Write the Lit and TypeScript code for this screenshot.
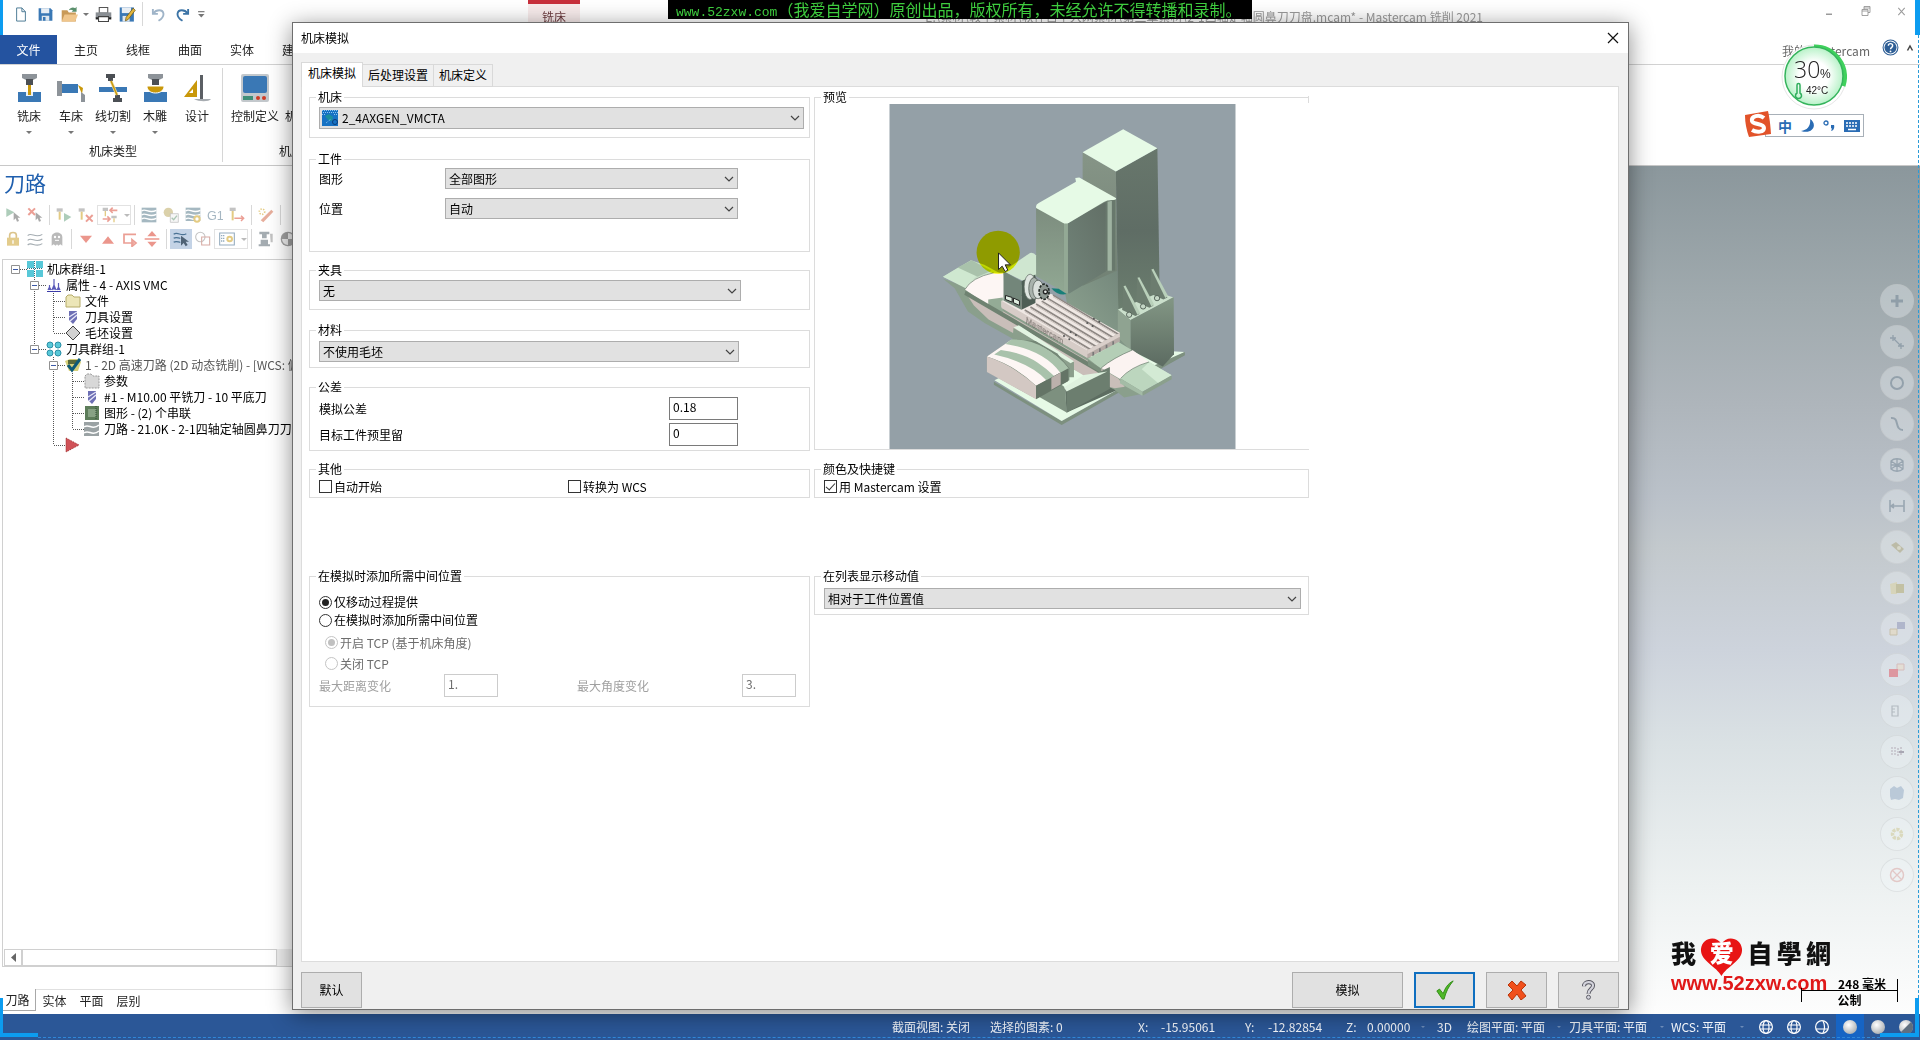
import { LitElement, html, css, svg, nothing, TemplateResult } from "lit";
import { customElement, property, state } from "lit/decorators.js";
import { classMap } from "lit/directives/class-map.js";

const BLUE = "#3a78b5";
const GOLD = "#c9980a";

/* Icons are drawn on a 24 x 24 grid unless another box is given. */
const icons: Record<string, TemplateResult> = {
  doc: svg`<path d="M4.500 1.500h9l6 6v15h-15z" fill="#fff" stroke="#4c7a94" stroke-width="1.600"/><path d="M13.500 1.500v6h6" fill="none" stroke="#4c7a94" stroke-width="1.600"/>`,
  save: svg`<path d="M1 2h19l3 3v17H1z" fill="${BLUE}"/><path d="M5 2h13v8H5z" fill="#e8eef4"/><path d="M6 14h12v8H6z" fill="#dfe7ee"/><path d="M8 16h4v6H8z" fill="${BLUE}"/>`,
  open: svg`<path d="M1 6h8l2 3h10v13H1z" fill="#c99a58"/><path d="M5 12h19l-4 10H1z" fill="#f0c68c"/><path d="M11 6c2-4 6-5 9-3l2-2v7h-7l2-2c-2-1-4-1-6 0z" fill="#5a8f6c"/>`,
  print: svg`<path d="M6 2h12v8H6z" fill="#fff" stroke="#555" stroke-width="1.500"/><path d="M1 9h22v8H1z" fill="#8a8f94"/><path d="M1 16h22v3H1z" fill="#222"/><path d="M5 15h14v7H5z" fill="#fff" stroke="#444" stroke-width="1.500"/>`,
  saveas: svg`<path d="M1 2h20v20H1z" fill="${BLUE}"/><path d="M4 2h13v8H4z" fill="#e8eef4"/><path d="M5 14h10v8H5z" fill="#dfe7ee"/><path d="M20 3l3 3-10 13-4 2 1-5z" fill="#e2b53c" stroke="#6b5310"/>`,
  undo: svg`<path d="M3 3v8h8" fill="none" stroke="#9fb4c8" stroke-width="3"/><path d="M4 10c4-6 15-7 16 1 0 5-3 8-8 11" fill="none" stroke="#9fb4c8" stroke-width="3"/>`,
  redo: svg`<path d="M21 3v8h-8" fill="none" stroke="#3c74a6" stroke-width="3"/><path d="M20 10C16 4 5 3 4 11c0 5 3 8 8 11" fill="none" stroke="#3c74a6" stroke-width="3"/>`,
  more: svg`<path d="M7 7h11v2H7z" fill="#777"/><path d="M7 12h11l-5.500 6z" fill="#777"/>`,
  min: svg`<path d="M4 17h12v3H4z" fill="#9a9a9a"/>`,
  restore: svg`<path d="M8 3h12v12H8zM8 6h12" fill="none" stroke="#8c8c8c" stroke-width="1.600"/><path d="M4 9h12v12H4zM4 12h12" fill="#fff" stroke="#8c8c8c" stroke-width="1.600"/>`,
  close: svg`<path d="M5 4l14 16M19 4L5 20" stroke="#9a9a9a" stroke-width="2.200"/>`,
  select: svg`<path d="M2 2l12 6-12 7z" fill="#5f9c78"/><path d="M13 8v12l3-3 2 5 3-1-2-5h4z" fill="#555"/>`,
  deselect: svg`<path d="M2 2l10 10M12 2L2 12" stroke="#d8402c" stroke-width="3"/><path d="M13 8v12l3-3 2 5 3-1-2-5h4z" fill="#555"/>`,
  regen: svg`<path d="M1 2h9v5H1z" fill="#888"/><path d="M4 7h3v12H4z" fill="${GOLD}"/><path d="M12 9l11 6-11 7z" fill="#5f9c78"/>`,
  regenx: svg`<path d="M1 2h9v5H1z" fill="#888"/><path d="M4 7h3v12H4z" fill="${GOLD}"/><path d="M12 12l10 10M22 12L12 22" stroke="#d8402c" stroke-width="3"/>`,
  swap: svg`<path d="M1 1h8v5H1zM14 13h8v4h-8z" fill="#888"/><path d="M4 6h2v8H4zM17 17h2v6h-2z" fill="${GOLD}"/><path d="M12 5h11M16 1l-4 4 4 4M1 18h10M8 14l4 4-4 4" stroke="#d8402c" stroke-width="2.400" fill="none"/>`,
  waves: svg`<path d="M1 1h22v22H1z" fill="#4d7484"/><path d="M1 6c6-5 10 5 22-1M1 12c6-5 10 5 22-1M1 18c6-5 10 5 22-1" stroke="#fff" stroke-width="2" fill="none"/>`,
  verify: svg`<circle cx="8" cy="8" r="7" fill="#b9a458"/><path d="M11 10h12v13H11z" fill="#eee" stroke="#777"/><path d="M13 16l3 3 5-6" stroke="#5a8f6c" stroke-width="2" fill="none"/>`,
  wavegear: svg`<path d="M1 1h22v20H1z" fill="#4d7484"/><path d="M1 6c6-5 10 5 22-1M1 12c6-5 10 5 22-1M1 18c6-5 10 5 22-1" stroke="#fff" stroke-width="2" fill="none"/><circle cx="18" cy="18" r="4" fill="#fff" stroke="${GOLD}" stroke-width="3"/>`,
  g1: svg`<text x="0" y="19" font-size="19" fill="#4d6f86" font-family="Liberation Sans, sans-serif">G1</text>`,
  toolarrow: svg`<path d="M1 1h9v5H1z" fill="#888"/><path d="M4 6h3v14H4z" fill="${GOLD}"/><path d="M8 17h14M18 13l4 4-4 4" stroke="#d8402c" stroke-width="2.200" fill="none"/>`,
  wand: svg`<path d="M4 20L20 4l3 3L8 23z" fill="#d0603c"/><circle cx="6" cy="7" r="4" fill="none" stroke="${GOLD}" stroke-width="2.500" stroke-dasharray="2 2"/>`,
  lock: svg`<path d="M7 11V6c0-5 10-5 10 0v5" fill="none" stroke="#b98a1c" stroke-width="2.500"/><path d="M3 10h18v12H3z" fill="#c99a1c"/><path d="M11 14h2v5h-2z" fill="#fff"/>`,
  wavy: svg`<path d="M1 7c6-6 11 5 22-2M1 14c6-6 11 5 22-2M1 21c6-6 11 5 22-2" stroke="#4b5b66" stroke-width="1.600" fill="none"/>`,
  ghost: svg`<path d="M4 22V9c0-9 16-9 16 0v13l-3-2-3 2-2-2-2 2-3-2z" fill="#777"/><circle cx="9" cy="9" r="1.800" fill="#fff"/><circle cx="15" cy="9" r="1.800" fill="#fff"/><path d="M9 14h6" stroke="#fff" stroke-width="1.500"/>`,
  down: svg`<path d="M3 7h18L12 18z" fill="#d8301c"/>`,
  up: svg`<path d="M3 19h18L12 8z" fill="#d8301c"/>`,
  loop: svg`<path d="M21 5H3v13h15M15 13l6 5-6 5z" fill="none" stroke="#d8402c" stroke-width="2.600"/>`,
  split: svg`<path d="M12 0l7 8H5zM12 24l7-8H5zM1 11h22v2H1z" fill="#d8301c"/>`,
  wavesel: svg`<path d="M1 5c6-5 11 4 19-1M1 11c4-3 7 0 10 0M1 17c4-3 7 0 10 0" stroke="#2c5a80" stroke-width="1.800" fill="none"/><path d="M12 7v15l4-4 3 5 3-2-3-5h5z" fill="#33475a"/>`,
  shapes: svg`<circle cx="8" cy="9" r="7" fill="none" stroke="#888" stroke-width="1.600"/><path d="M10 9h12v12H10z" fill="none" stroke="#b05a4c" stroke-width="1.600"/>`,
  listgear: svg`<path d="M1 3h22v18H1z" fill="#fff" stroke="#2c5a80" stroke-width="1.600"/><path d="M4 6v12M7 6v12" stroke="#2c5a80" stroke-width="2" stroke-dasharray="2 2"/><circle cx="16" cy="12" r="3.500" fill="none" stroke="${GOLD}" stroke-width="3"/>`,
  machine: svg`<path d="M2 1h15v4H2zM6 5h7v6H6zM1 20h17v3H1zM4 13h11v7H4z" fill="#4b5b66"/><path d="M18 4h4v13h-3z" fill="#888"/>`,
  ball: svg`<circle cx="12" cy="12" r="11" fill="#444"/><path d="M12 3a9 9 0 0 1 9 9h-9zM12 12v9a9 9 0 0 1-9-9z" fill="#ddd"/>`,
  help: svg`<circle cx="12" cy="12" r="10.500" fill="#fff" stroke="#2f5f96" stroke-width="1.500"/><circle cx="12" cy="12" r="8.500" fill="#2f5f96"/><path d="M9 9.500c0-4 6-4 6 0 0 2.500-3 2-3 5" stroke="#fff" stroke-width="2" fill="none"/><circle cx="12" cy="17.500" r="1.300" fill="#fff"/>`,
  caretup: svg`<path d="M7 17l5-9 5 9" fill="none" stroke="#444" stroke-width="3"/>`,
  /* ribbon, 28 x 28 */
  mill: svg`<path d="M7 0h15v4l-4 2h-7L7 4z" fill="#8d9399"/><path d="M11 5h7v6h-7z" fill="#4b4f54"/><path d="M3 18h23v10H3z" fill="${BLUE}"/><path d="M11 18h7v4h-7z" fill="#e9f0f6"/><path d="M13 11h3v10h-3z" fill="${GOLD}"/>`,
  lathe: svg`<path d="M0 7h5v15H0z" fill="#8d9399"/><path d="M5 10h16v9H5z" fill="${BLUE}"/><path d="M21 11l5 3-1 6z" fill="${GOLD}"/><path d="M24 18l4 3v7h-4z" fill="#8d9399"/>`,
  wire: svg`<path d="M0 13h28v5H0z" fill="${BLUE}"/><path d="M7 0h9v4h-2v3H9V4H7zM14 28h9v-4h-2v-3h-5v3h-2z" fill="#4b4f54"/><path d="M12 7l6 14" stroke="#e8d9a0" stroke-width="3"/><path d="M12 7l6 14" stroke="${GOLD}" stroke-width="1.500"/>`,
  router: svg`<path d="M7 0h15v4l-4 2h-7L7 4z" fill="#8d9399"/><path d="M11 5h7v6h-7z" fill="#4b4f54"/><path d="M3 18h23v10H3z" fill="${BLUE}"/><path d="M6 12h17c0 4-3 7-8.500 7S6 16 6 12z" fill="${GOLD}" stroke="#fff"/>`,
  design: svg`<path d="M14 6v17H1zM10 15v4H6z" fill="${GOLD}" fill-rule="evenodd"/><path d="M17 1h3v25h-3z" fill="#5b5f64"/><path d="M11 25h17c-2 3-12 3-17 0z" fill="#a7acb1"/>`,
  control: svg`<rect x="0" y="0" width="28" height="28" rx="2" fill="#c3c8cc"/><rect x="2" y="2" width="24" height="17" rx="2" fill="${BLUE}"/><path d="M2 22h10v4H2z" fill="#3f8f78"/><circle cx="17" cy="24" r="2" fill="#cf3b25"/><circle cx="23" cy="24" r="2" fill="#cf3b25"/>`,
  /* tree, 16 x 16 */
  group: svg`<g fill="#58c8d8"><path d="M0 0h7v7H0zM9 0h7v7H9zM0 9h7v7H0zM9 9h7v7H9z"/></g><path d="M0 7.500h16M7.500 0v16" stroke="#2f6f80" stroke-dasharray="1 1"/>`,
  props: svg`<path d="M1 14.500h14" stroke="#3b3ba8"/><path d="M3.500 13V8M8 13V2M12.500 13V6M2 13l1.500-3L5 13M6 13l2-5 2 5M11 13l1.500-3 1.500 3" stroke="#5a5ab8" stroke-width="1.200" fill="none"/>`,
  folder: svg`<path d="M1 4l2-2h4l2 2h6v10H1z" fill="#ece6b8" stroke="#b5ab68"/>`,
  tool: svg`<path d="M4 2h8v8l-4 5-4-4z" fill="#6d6fb4"/><path d="M4 8l8-5M5 12l7-6" stroke="#e8e8f8" stroke-width="1.300"/>`,
  stock: svg`<path d="M8 1l7 7-7 7-7-7z" fill="#d2d2d2" stroke="#444"/>`,
  tgroup: svg`<g fill="#58c8d8" stroke="#2b8fa6"><circle cx="4" cy="4" r="3"/><circle cx="12" cy="4" r="3"/><circle cx="4" cy="12" r="3"/><circle cx="12" cy="12" r="3"/></g>`,
  op: svg`<path d="M0 4l5-2h9l2 3-3 9H4z" fill="#d6cf7a"/><path d="M3 3h9v4H3z" fill="#5a6a3a"/><path d="M3 8l4 5 8-11" stroke="#0d5a78" stroke-width="3" fill="none"/>`,
  params: svg`<path d="M1 3l2-2h4l2 2h6v12H1z" fill="#d8d8d8" stroke="#999" stroke-dasharray="2 1"/>`,
  geom: svg`<path d="M1 1h14v14H1z" fill="#5d7d5a"/><path d="M4 4h8v8H4z" fill="#87a284"/><path d="M12 1v14" stroke="#2f4a34" stroke-dasharray="1 1"/>`,
  nc: svg`<path d="M0 1h15v14H0z" fill="#9aa2a4"/><path d="M0 6c5-4 8 4 15-2M0 12c5-4 8 4 15-2" stroke="#fff" stroke-width="1.500" fill="none"/>`,
  insert: svg`<path d="M1 1l13 7-13 7z" fill="#d05258" stroke="#a03030" stroke-dasharray="1 1"/>`,
  vmc: svg`<path d="M0 0h16v16H0z" fill="#1672c4"/><path d="M3 6l4-2 4 3-1 4-4-1z" fill="#1c8f9c"/><circle cx="13" cy="12" r="2.500" fill="none" stroke="#0b3d78"/><path d="M0 .500h16M1 2.500h15M0 4.500h4M12 4.500h4M4 13l5-4" stroke="#8cc4f0" stroke-dasharray="1 1"/>`,
  /* quick mask, 16 x 16 */
  q0: svg`<path d="M8 2v12M2 8h12" stroke="#667a8a" stroke-width="3"/>`,
  q1: svg`<path d="M4 1v6M1 4h6M12 9v6M9 12h6M5 5l7 7" stroke="#667a8a" stroke-width="1.300"/>`,
  q2: svg`<circle cx="8" cy="8" r="6" fill="none" stroke="#667a8a" stroke-width="2"/>`,
  q3: svg`<path d="M2 2c9-1 3 12 12 12" fill="none" stroke="#667a8a" stroke-width="2"/>`,
  q4: svg`<path d="M2 4c3-3 9-3 12 0v8c-3 3-9 3-12 0zM2 4l12 8M14 4L2 12M2 8h12M8 2v12" fill="none" stroke="#667a8a" stroke-width="1.300"/>`,
  q5: svg`<path d="M1 2v12M15 2v12M1 8h14M5 6L2 8l3 2" stroke="#667a8a" stroke-width="1.600" fill="none"/>`,
  q6: svg`<path d="M2 6l5-3 8 7-4 4z" fill="#a8a074"/><circle cx="10" cy="9" r="2" fill="#ddd8b8"/>`,
  q7: svg`<path d="M1 4l7-2v12H2z" fill="#d8cf96"/><path d="M7 4h8v9H7z" fill="#b2a868"/>`,
  q8: svg`<path d="M8 1h8v7H8z" fill="#8a90b4"/><path d="M1 8h7v6H1z" fill="#e8d8b4" stroke="#b8a474"/>`,
  q9: svg`<path d="M8 2h7v6H8z" fill="#ecdcc4" stroke="#d09a94"/><path d="M0 7h9v8H0z" fill="#e0505c"/>`,
  q10: svg`<path d="M3 3h6v10H3zM9 3v10M3 6h3M3 9h3M5 3h4" fill="none" stroke="#889098" stroke-width="1.200"/>`,
  q11: svg`<path d="M2 4h6M2 7h6M2 10h6M9 4v9M12 3v9" stroke="#a89aa8" stroke-width="1.600" stroke-dasharray="2 1"/><path d="M10 7h5v2h-5z" fill="#70687c"/>`,
  q12: svg`<path d="M1 4l4-3 3 2 4-2 3 4-1 8-4 2-4-1-4 1-1-4z" fill="#90a8c4"/>`,
  q13: svg`<circle cx="8" cy="8" r="4.500" fill="none" stroke="#ccc48c" stroke-width="3.500" stroke-dasharray="3 1"/>`,
  q14: svg`<circle cx="8" cy="8" r="6.500" fill="none" stroke="#d8a09c" stroke-width="1.500"/><path d="M4 4l8 8M12 4l-8 8" stroke="#d8a09c" stroke-width="1.300"/>`,
};

const icon = (name: string, w = 16, h = w, box = 24) => html`<svg
  class="icon" width=${w} height=${h} viewBox="0 0 ${box} ${box}" preserveAspectRatio="none" aria-hidden="true">${icons[name]}</svg>`;

const sphere = (kind: string) => {
  if (kind === "wire" || kind === "wire2" || kind === "wire3")
    return svg`<g fill="none" stroke="#fff" stroke-width="1.200"><circle cx="8" cy="8" r="6.400"/>${
      kind === "wire3"
        ? svg`<path d="M9 2q3 6 0 12M2 10h12"/>`
        : svg`<ellipse cx="8" cy="8" rx="3" ry="6.400"/><path d="M2 6h12M2 10h12"/>`
    }</g>`;
  return svg`<defs><radialGradient id="ball" cx=".4" cy=".35" r=".7"><stop offset="0" stop-color="#fff"/><stop offset="1" stop-color="#a9adb0"/></radialGradient></defs><circle cx="8" cy="8" r="7" fill="url(#ball)"/>${
    kind === "half" ? svg`<path d="M3 13L13 3a7 7 0 0 1-10 10z" fill="#5f6f80"/>` : nothing
  }`;
};

/* A drop-down list with the flat grey face of a native dialog. */
@customElement("combo-box")
class ComboBox extends LitElement {
  @property() value = "";
  @property() label = "";
  @property() glyph = "";
  static styles = css`
    :host { display: block; min-width: 0; }
    .box { display: grid; grid-template-columns: auto 1fr auto; align-items: center; }
    select {
      grid-area: 1 / 1 / 2 / 4; appearance: none; box-sizing: border-box; width: 100%; height: 21px;
      margin: 0; padding: 0 20px 0 3px; border: 1px solid #adadad; border-radius: 0; background: #e1e1e1;
      color: #000; font: 12px/16px "Noto Sans CJK SC", sans-serif;
    }
    .with-glyph select { height: 22px; padding-left: 22px; }
    .icon { grid-area: 1 / 1; margin-left: 3px; pointer-events: none; }
    .chevron { grid-area: 1 / 3; margin-right: 4px; pointer-events: none; }
  `;
  render() {
    return html`<div class=${classMap({ box: true, "with-glyph": !!this.glyph })}>
      <select aria-label=${this.label}><option>${this.value}</option></select>
      ${this.glyph ? icon(this.glyph, 16, 16, 16) : nothing}
      <svg class="chevron" width="10" height="6" viewBox="0 0 10 6"><path d="M1 1l4 4 4-4" fill="none" stroke="#444" stroke-width="1.200"/></svg>
    </div>`;
  }
}

/* Isometric view of the four-axis mill. */
@customElement("machine-preview")
class MachinePreview extends LitElement {
  static styles = css`
    :host { display: block; }
    svg { display: block; }
    .spot { mix-blend-mode: multiply; }
  `;
  render() {
    const slots = [0, 1, 2, 3, 4, 5].map((i) => {
      const x = 644 + i * 17, y = 692 - i * 9;
      return svg`<path d="M${x} ${y}L${x + 200} ${y + 120}" stroke="#8d8783" stroke-width="5"/><path d="M${x} ${y + 5}L${x + 200} ${y + 125}" stroke="#cfc6c1" stroke-width="3"/>`;
    });
    const gussets = [0, 1, 2].map((i) => {
      const x = 940 + i * 42, y = 620 - i * 25;
      return svg`<path d="M${x} ${y}l7-2 42 86-12 6-40-18z" fill="#6c7d6f"/><path d="M${x + 1} ${y}l6-2 44 82-8 6z" fill="#b9d0ba"/><circle cx="${x + 18}" cy="${y + 86}" r="8" fill="#c4d6c5" stroke="#56655a" stroke-width="3"/>`;
    });
    return html`<svg width="347" height="345" viewBox="237 72 1041 1038" role="img" aria-label="机床预览">
      <defs>
        <linearGradient id="colR" x1="0" y1="0" x2="0" y2="1"><stop offset="0" stop-color="#68776c"/><stop offset=".5" stop-color="#5f6d65"/><stop offset="1" stop-color="#6c7f6f"/></linearGradient>
        <linearGradient id="colL" x1="0" y1="0" x2="0" y2="1"><stop offset="0" stop-color="#869587"/><stop offset="1" stop-color="#6d7d70"/></linearGradient>
        <linearGradient id="headL" x1="0" y1="0" x2="0" y2="1"><stop offset="0" stop-color="#7c8c7e"/><stop offset="1" stop-color="#91a893"/></linearGradient>
        <linearGradient id="headR" x1="1" y1="0" x2="0" y2="1"><stop offset="0" stop-color="#626f66"/><stop offset="1" stop-color="#72857a"/></linearGradient>
        <linearGradient id="base" x1="0" y1="0" x2="0" y2="1"><stop offset="0" stop-color="#839785"/><stop offset="1" stop-color="#5c6b61"/></linearGradient>
        <linearGradient id="slope" x1="0" y1="1" x2="1" y2="0"><stop offset="0" stop-color="#90a692"/><stop offset="1" stop-color="#72857a"/></linearGradient>
      </defs>
      <path d="M237 72h1041v1038H237z" fill="#94a0a7"/>
      <path d="M551 908l204 118 370-208v10L755 1038 551 917z" fill="#7d907f"/>
      <path d="M553 903l60-30 250-70 262 15-370 208z" fill="#e6fae6"/>
      <path d="M985 880l140-62v10l-140 72z" fill="#7d907f"/>
      <path d="M610 800l155 125 5 75-150-85z" fill="#7d907f"/>
      <path d="M765 925l160-90 60 70-215 95z" fill="#5d6d61"/>
      <path d="M765 640l155-68 6 118 36 32v140L780 720z" fill="url(#slope)"/>
      <path d="M818 217l100 58 7 420-107-60z" fill="url(#colL)"/>
      <path d="M918 275l125-70 7 450-125 50z" fill="url(#colR)"/>
      <path d="M818 217l122-69 103 57-125 70z" fill="#e6fae6"/>
      <path d="M770 640l152-66 4 118 36 30v90L780 690z" fill="url(#slope)"/>
      <path d="M924 690l124-50 44 14-130 69z" fill="#cbe0cc"/>
      <path d="M962 722l130-69 1 172-34 37-97-50z" fill="url(#base)"/>
      <path d="M924 690l38 32v92l-38-40z" fill="#8fa391"/>
      ${gussets}
      <path d="M800 294l118 64-4 216h-30l-84-260z" fill="#7a8b7d"/>
      <path d="M888 366l28-6v214h-28z" fill="#68786c"/><path d="M893 366l13-3v211h-13z" fill="#9fb3a1"/>
      <path d="M678 380l92 50v212l-92-52z" fill="url(#headL)"/>
      <path d="M766 432l122-66v210l-110 66-12-2z" fill="url(#headR)"/><path d="M762 428l12 2v212l-12-3z" fill="#93a995"/>
      <path d="M678 380q0-6 8-10l112-64-2-11 12-2 110 62q4 5-8 6-18-1-28 6l-106 63q-10 4-18-1l-80-44z" fill="#e6fae6"/>
      <path d="M724 626q20 24 46 18l-24-16z" fill="#187f78"/>
      <path d="M398 598l35 28 40 70 50 35 90 50 300 150 30 24 60-12-60-48-410-250z" fill="#8a9f8c"/>
      <path d="M466 640l25 38 44 42 90 50 240 145 50 12 30-4-20-25-390-228z" fill="#c9beb9"/>
      <path d="M398 592l84-50 40 14 150 80-98 30-38-12z" fill="#c7dfc8"/>
      <path d="M398 592l46-28 58 20-36 42z" fill="#cfe8d0"/>
      <path d="M442 564l42-22 60 32-42 18z" fill="#a9c2ab"/>
      <path d="M464 630q20-36 86-50h30l4 76-50 22z" fill="#fdf6f4"/>
      <path d="M534 660l44-6v58l-44-26z" fill="#94ab96"/>
      <path d="M466 634l408 236-2 14-410-238z" fill="#6f8271"/>
      <path d="M574 664l60-14 90-6 206 116-5 30-93 45-258-153z" fill="#efe8e4"/>
      <path d="M574 664l258 150v22L574 686z" fill="#d6ccc7"/>
      <path d="M832 813l98-53v28l-98 50z" fill="#b5aaa5"/>
      ${slots}
      <path d="M832 813l98-53v12l-98 53z" fill="#d9cfca"/>
      <path d="M850 818v12M870 807v12M890 796v12M910 786v11" stroke="#777" stroke-width="5" fill="none"/>
      <text x="0" y="0" transform="matrix(.88 .51 -.1 1 646 730)" font-family="Liberation Sans, sans-serif" font-size="26" fill="none" stroke="#6f6864">Mastercam</text>
      <g fill="#555"><circle cx="852" cy="718" r="3"/><circle cx="868" cy="727" r="3"/><circle cx="832" cy="731" r="3"/><circle cx="848" cy="740" r="3"/><circle cx="782" cy="758" r="3"/><circle cx="798" cy="767" r="3"/><circle cx="762" cy="770" r="3"/><circle cx="778" cy="780" r="3"/></g>
      <path d="M834 838l92-50 40 24-94 56z" fill="#b4ceb6"/>
      <path d="M874 866q36-30 94-54l50 36q-40 10-86 52z" fill="#fbf3f1"/>
      <path d="M932 898q30-34 86-50l68 40-88 50z" fill="#bcd6be"/>
      <path d="M1018 848l68 40-40 24-50-42z" fill="#d3ead4"/>
      <path d="M998 938l88-50v12l-88 50z" fill="#8ba08c"/><path d="M932 898l66 40v12l-68-38z" fill="#a4bca6"/>
      <path d="M834 842l40 26v14l-40-24z" fill="#7b907d"/>
      <path d="M874 866q36-30 94-54M932 898q30-34 86-50M464 630q20-36 86-50" fill="none" stroke="#66786a" stroke-width="2"/>
      <path d="M610 746l182 102v46h-16v-26L608 772z" fill="#8b9f8c"/><path d="M610 744l16-6 166 108-10 6z" fill="#e2f4e2"/>
      <path d="M530 832l76-52 70 5 66 38 36 44v36l-100 56-148-82z" fill="#748776"/>
      <path d="M530 832l72-50q60 4 100 24 45 25 72 62l-96 52q-60-60-148-88z" fill="#fdf6f4"/>
      <path d="M552 826l20-14q70 10 110 38 30 20 52 42l-22 14q-50-56-160-80z" fill="#a9c2ab"/>
      <path d="M586 794l18-14q58 0 100 26 45 25 72 62l-24 14q-50-70-166-88z" fill="#a9c2ab"/>
      <path d="M530 832q80 26 148 88v40l-148-82z" fill="#d3c8c3"/>
      <path d="M678 920l96-52v38l-96 54z" fill="#647466"/><path d="M724 896l28-16v36l-28 16z" fill="#bcb1ac"/>
      <path d="M770 925l130-62v66l-130 72z" fill="#6c7e6f"/><path d="M762 925l60-38 70-10-122 60z" fill="#dff2df"/>
      <path d="M580 575l80-55q12-2 18 8v60l-40 16z" fill="#cfe6d0"/>
      <path d="M580 575l54 30v86l-54-28z" fill="#73867a"/><path d="M634 605l42-20v86l-42 20z" fill="#4e5e55"/>
      <path d="M586 648l20 6v14l-20-8zM610 656l18 8v14l-18-8z" fill="#dfeee0" stroke="#222" stroke-width="3"/>
      <ellipse cx="660" cy="622" rx="18" ry="38" fill="#dfe5e0" stroke="#5a655e" stroke-width="2"/>
      <ellipse cx="672" cy="627" rx="16" ry="33" fill="#a9b2ac" stroke="#39433d" stroke-width="2"/>
      <ellipse cx="684" cy="630" rx="16" ry="28" fill="#dbe0dc" stroke="#4b554e" stroke-width="2"/>
      <ellipse cx="702" cy="637" rx="15" ry="23" fill="#8e9892" stroke="#252c28" stroke-width="5" stroke-dasharray="8 4"/>
      <circle cx="706" cy="637" r="6" fill="#e7ece8" stroke="#222" stroke-width="4"/>
      <circle class="spot" cx="564" cy="518" r="65" fill="#f7f700"/>
      <path d="M565 520v50l11-10 9 16 8-4-8-16h16z" fill="#fff" stroke="#222" stroke-width="3"/>
    </svg>`;
  }
}

/* Each cell of `guides` is one 19px step of indent: space, v (line), t (tee), l (elbow), 0/M/m (expander). */
const tree: { guides: string; glyph: string; text: string; dim?: boolean }[] = [
  { guides: "0", glyph: "group", text: "机床群组-1" },
  { guides: " M", glyph: "props", text: "属性 - 4 - AXIS VMC" },
  { guides: " vt", glyph: "folder", text: "文件" },
  { guides: " vt", glyph: "tool", text: "刀具设置" },
  { guides: " vl", glyph: "stock", text: "毛坯设置" },
  { guides: " m", glyph: "tgroup", text: "刀具群组-1" },
  { guides: "  M", glyph: "op", text: "1 - 2D 高速刀路 (2D 动态铣削) - [WCS: 俯视图]", dim: true },
  { guides: "  vt", glyph: "params", text: "参数" },
  { guides: "  vt", glyph: "tool", text: "#1 - M10.00 平铣刀 - 10 平底刀" },
  { guides: "  vt", glyph: "geom", text: "图形 - (2) 个串联" },
  { guides: "  vl", glyph: "nc", text: "刀路 - 21.0K - 2-1四轴定轴圆鼻刀刀盘" },
  { guides: "  l", glyph: "insert", text: "" },
];

const guide = (c: string) => {
  const up = "vtlMm".includes(c), down = "vtM".includes(c), across = "tl0Mm".includes(c), box = "0Mm".includes(c);
  const d = `${up ? "M9.5 0V8" : ""}${down ? "M9.5 8V16" : ""}${across ? "M10 8.5H21" : ""}`;
  return html`<svg class="guide" width="19" height="16" viewBox="0 0 19 16">
    <path d=${d} stroke="#555" stroke-dasharray="1 1" fill="none"/>
    ${box ? svg`<path d="M5.500 4.500h8v8h-8z" fill="#fff" stroke="#919191"/><path d="M7 8.500h5" stroke="#3c5aa8"/>` : nothing}
  </svg>`;
};

@customElement("app-root")
class AppRoot extends LitElement {
  @state() private tab = 0;
  @state() private movement = 0;

  static styles = css`
    :host { display: block; font: 12px/16px "Noto Sans CJK SC", sans-serif; color: #222; }
    * { box-sizing: border-box; }
    button { font: inherit; color: inherit; margin: 0; padding: 0; border: 0; background: none; }
    .icon { display: block; flex: none; }
    .app { position: relative; display: flex; flex-direction: column; height: 100vh; min-height: 800px; overflow: hidden; background: #fff; }

    .titlebar { display: flex; height: 35px; align-items: flex-start; }
    .quick { display: flex; align-items: center; height: 28px; padding-left: 9px; }
    .quick button { display: grid; place-items: center; width: 24px; height: 20px; }
    .quick .narrow { width: 10px; }
    .rule { width: 1px; height: 24px; margin: 0 3px; background: #d8d8d8; }
    .arrow { border: 3px solid transparent; border-top: 3px solid #777; border-bottom: 0; width: 0; }
    .context { width: 52px; margin-left: 324px; height: 35px; padding-top: 5px; border-top: 4px solid #c8303c; background: #f8ecec; text-align: center; color: #6b3a3e; }
    .doc-title { flex: 1; padding-top: 9px; text-align: right; white-space: nowrap; color: #999; overflow: hidden; }
    .window { display: flex; margin-left: 334px; width: 103px; justify-content: space-between; padding: 5px 13px 0 7px; }

    .tabs { display: flex; height: 30px; align-items: stretch; border-bottom: 1px solid #d2d2d2; }
    .tabs button { width: 52px; }
    .tabs .file { width: 57px; margin-right: 3px; background: #2453a0; color: #fff; }
    .tabs .account { width: auto; margin-left: auto; padding: 2px 10px 0 0; color: #666; }
    .tabs .small { width: 20px; display: grid; place-items: center; padding-bottom: 4px; }

    .ribbon { display: flex; height: 101px; border-bottom: 1px solid #c8c8c8; }
    .section { display: flex; flex-direction: column; padding: 6px 4px 5px 8px; margin: 3px 0; border-right: 1px solid #d6d6d6; }
    .setup { padding-left: 5px; }
    .buttons { display: flex; }
    .buttons button { width: 42px; display: flex; flex-direction: column; align-items: center; white-space: nowrap; gap: 6px; height: 60px; }
    .buttons .wide { width: 54px; }
    .buttons .arrow { margin-top: 1px; }
    .caption { margin-top: 9px; text-align: center; }

    .work { flex: 1; display: flex; min-height: 0; }
    .panel { width: 340px; display: flex; flex-direction: column; background: #fff; }
    h1 { margin: 1px 0 6px 4px; font-size: 21px; line-height: 30px; font-weight: 400; color: #1f5fae; }
    .tools { display: flex; align-items: center; height: 24px; padding-left: 2px; }
    .tools > .tool { width: 22px; height: 20px; display: grid; place-items: center; flex: none; }
    .tools .icon, .tools .arrow { opacity: .5; }
    .tools > .combo { width: 34px; height: 20px; display: flex; align-items: center; gap: 6px; padding-left: 4px; border: 1px solid #e2e2e2; flex: none; }
    .tools > .on { background: #c4d3e6; }
    .tools .on .icon { opacity: .8; }
    .tools .rule { height: 20px; }
    .tree { flex: 1; margin: 8px 0 0 2px; padding: 1px 0 0 3px; border: 1px solid #d0d0d0; display: flex; flex-direction: column; min-height: 0; }
    .tree ul { list-style: none; margin: 0; padding: 0; flex: 1; }
    .tree li { display: flex; height: 16px; align-items: center; white-space: nowrap; color: #000; }
    .tree .dim { color: #555; }
    .tree .icon { margin: 0 4px 0 2px; }
    .guide { display: block; overflow: visible; flex: none; }
    .scroll { display: flex; height: 17px; background: #ececec; margin-left: -2px; }
    .scroll button { width: 18px; border: 1px solid #d0d0d0; background: #fff; display: grid; place-items: center; }
    .scroll span { width: 255px; background: #fff; border: 1px solid #d0d0d0; }
    .bottom { display: flex; margin-top: 22px; height: 25px; }
    .bottom button { width: 37px; height: 22px; border-top: 1px solid #e0e0e0; }
    .bottom .on { border: 1px solid #a8a8a8; border-top: 0; border-left: 0; width: 36px; }
    .bottom .rest { flex: 1; border-top: 1px solid #e0e0e0; }

    .view {
      flex: 1; position: relative; display: flex; justify-content: flex-end;
      background: linear-gradient(#8b979c, #a0aaae 16%, #aeb5bb 28%, #bac1c9 39%, #c3c9cd 45%, #cdd3dc 57%, #dae1e4 68%, #edf1f1 85%, #fdfdfd);
    }
    .mask { display: flex; flex-direction: column; justify-content: space-between; height: 608px; margin: 118px 6px 0 0; }
    .mask button { width: 34px; height: 34px; border-radius: 50%; border: 1px solid rgba(185, 190, 190, .3); background: rgba(240, 246, 250, .34); display: grid; place-items: center; }
    .mask .icon { opacity: .5; }
    .mark { position: absolute; right: 89px; bottom: 23px; width: 160px; font-family: "Liberation Sans", "Noto Sans CJK SC", sans-serif; color: #111; }
    .mark .name { display: flex; align-items: center; justify-content: space-between; font-size: 25px; line-height: 25px; font-weight: 900; height: 38px; padding-bottom: 4px; }
    .heart { display: grid; place-items: center; width: 43px; padding-top: 6px; }
    .heart svg, .heart span { grid-area: 1 / 1; }
    .heart span { color: #fff; font-size: 24px; line-height: 26px; padding-bottom: 6px; z-index: 1; }
    .mark a { display: block; color: #e01818; font-size: 20px; line-height: 16px; font-weight: 700; text-decoration: none; }
    .scale { position: absolute; right: 22px; bottom: 8px; width: 97px; color: #000; font-weight: 700; line-height: 13px; }
    .scale div { text-align: right; padding: 0 12px 0 0; }
    .scale svg { display: block; margin: -12px 0 -13px; }
    .scale .unit { text-align: center; padding: 3px 0 0; }

    .status { display: grid; justify-content: end; align-items: center; height: 26px; background: #2b5797; color: #f2f5fa; white-space: nowrap;
      grid-template-columns: 98px 148px 23px 84px 23px 78px 21px 55px 15px 30px 91px 11px 92px 10px 70px 11px repeat(6, 28px); }
    .status button { text-align: left; height: 26px; }
    .status .arrow { border-width: 2px; border-top: 2px solid #6c8bb8; border-bottom: 0; margin-left: -1px; }
    .status .ball { display: grid; place-items: center; }
    .status .on { background: #1664c4; }

    .dialog { position: absolute; left: 292px; right: 291px; top: 22px; bottom: 30px; display: flex; flex-direction: column;
      border: 1px solid #6e6e6e; background: #f0f0f0; color: #000; box-shadow: 0 4px 22px rgba(0, 0, 0, .45); }
    .dialog header { display: flex; justify-content: space-between; align-items: center; height: 30px; padding: 0 9px 0 8px; background: #fff; }
    .dialog h2 { margin: 0; font: inherit; }
    .body { flex: 1; display: flex; flex-direction: column; padding: 9px 9px 0 8px; min-height: 0; }
    .pages { display: flex; align-items: flex-end; height: 25px; margin-bottom: -1px; z-index: 1; }
    .pages button { height: 23px; padding: 0 5px 2px; border: 1px solid #d9d9d9; border-left: 0; background: #f0f0f0; }
    .pages .on { height: 25px; padding: 0 6px 4px; border-left: 1px solid #d9d9d9; border-bottom: 0; background: #fff; }
    .page { flex: 1; display: flex; gap: 4px; align-items: flex-start; border: 1px solid #dcdcdc; background: #fff; padding: 3px 7px; min-height: 0; }
    .left { width: 501px; }
    .right { width: 495px; }
    fieldset { position: relative; margin: 0; min-width: 0; border: 1px solid #dcdcdc; padding: 3px 5px 8px 9px; }
    legend { margin-left: -3px; padding: 0 2px; line-height: 14px; }
    .pair { display: grid; grid-template-columns: 126px 293px; row-gap: 9px; align-items: center; }
    .work-group { margin-top: 14px; padding: 2px 5px 32px 9px; }
    .fixture { margin-top: 11px; padding-right: 68px; }
    .material { margin-top: 13px; padding: 4px 70px 5px 9px; }
    .tolerance { margin-top: 12px; padding: 3px 5px 4px 9px; }
    .tolerance .pair { grid-template-columns: 350px 69px; row-gap: 3px; }
    .other { margin-top: 11px; padding: 2px 5px 2px 9px; }
    .checks { display: grid; grid-template-columns: 249px 1fr; }
    .moves { margin-top: 71px; padding: 10px 5px 9px 9px; }
    .text { width: 100%; height: 23px; margin: 0; padding: 0 3px 5px; border: 1px solid #7a7a7a; border-radius: 0; background: #fff; color: #000; font: 12px/16px "Noto Sans CJK SC", sans-serif; }
    .text:disabled { border-color: #ccc; color: #6d6d6d; }
    .choice { display: flex; align-items: center; gap: 2px; height: 17px; }
    .choice input { appearance: none; flex: none; width: 13px; height: 13px; margin: 0; border: 1px solid #333; background: #fff; display: grid; place-items: center; }
    .choice input[type="radio"] { border-radius: 50%; }
    .choice input[type="radio"]:checked::before { content: ""; width: 7px; height: 7px; border-radius: 50%; background: #222; }
    .choice input[type="checkbox"]:checked::before { content: ""; width: 8px; height: 4px; border: solid #333; border-width: 0 0 1px 1px; transform: rotate(-48deg); margin-bottom: 3px; }
    .tall { height: 18px; }
    .sub { height: 21px; padding-left: 6px; color: #6d6d6d; }
    .sub:first-of-type { margin-top: 3px; }
    .choice input:disabled { border-color: #c4c4c4; }
    .choice input[type="radio"]:disabled:checked::before { background: #c0c0c0; }
    .limits { display: grid; grid-template-columns: 125px 54px 79px 165px 54px; align-items: center; color: #a0a0a0; }
    .limits .second { grid-column: 4; }
    .preview { padding: 0; border-right: 0; }
    .preview legend { margin-left: 6px; }
    .preview::after { content: ""; position: absolute; right: 0; top: -8px; height: 7px; border-right: 1px solid #dcdcdc; }
    .preview machine-preview { margin-left: 74px; }
    .colours { margin-top: 12px; padding: 2px 5px 2px 9px; }
    .values { margin-top: 71px; padding: 5px 7px 5px 9px; }
    .dialog footer { display: flex; gap: 11px; padding: 10px 9px 1px 8px; }
    .push { width: 61px; height: 36px; border: 1px solid #adadad; background: #e1e1e1; display: grid; place-items: center; }
    .simulate { width: 111px; margin-left: auto; }
    .default { border: 2px solid #0f6fc0; }

    .banner { position: absolute; left: 668px; top: 0; width: 584px; height: 19px; padding-left: 8px; background: #000; color: #3ecb3e;
      font: 16px/19px "Noto Sans CJK SC", sans-serif; white-space: nowrap; overflow: hidden; }
    .banner span { font: 13px/19px "Liberation Mono", monospace; }
    .gauge { position: absolute; right: 73px; top: 43px; }
    .ime { position: absolute; right: 56px; top: 110px; display: flex; align-items: center; }
    .ime .keys { display: flex; align-items: center; justify-content: space-between; width: 99px; height: 23px; margin: 3px 0 0 -7px; padding: 0 3px 0 12px; border: 1px solid #a8b0b8; background: #fff; color: #2a6cb4; font-weight: 700; font-size: 14px; }
    .ime .s { z-index: 1; }
    .edge { position: absolute; border: 0 solid #0c9cf0; pointer-events: none; }
    .tl { left: 0; top: 0; height: 35px; border-left-width: 3px; }
    .tr { right: 0; top: 0; height: 35px; border-right-width: 5px; }
    .bl { left: 0; bottom: 3px; width: 38px; height: 39px; border-left-width: 3px; border-bottom-width: 4px; }
    .br { right: 1px; bottom: 3px; width: 39px; height: 39px; border-right-width: 4px; border-bottom-width: 4px; }
    .dash-r { right: 1px; top: 35px; bottom: 42px; border-right: 1px dashed #2b9bd8; }
    .dash-b { left: 38px; right: 40px; bottom: 2px; border-bottom: 1px dashed #2f86d8; }
  `;

  private tool(name: string, on = false) {
    return html`<button class=${classMap({ tool: true, on })} aria-label=${name}>${icon(name, 16)}</button>`;
  }

  private ribbonButton(name: string, text: string, more = true, wide = false) {
    return html`<button class=${classMap({ wide })}>${icon(name, 28, 28, 28)}<span>${text}</span>${more ? html`<i class="arrow"></i>` : nothing}</button>`;
  }

  private renderShell() {
    const combo = (n: string) => html`<button class="combo" aria-label=${n}>${icon(n, 16)}<i class="arrow"></i></button>`;
    const rule = html`<i class="rule"></i>`;
    return html`
      <div class="titlebar">
        <div class="quick">
          <button aria-label="新建">${icon("doc", 14, 15)}</button>
          <button aria-label="保存">${icon("save", 15)}</button>
          <button aria-label="打开">${icon("open", 17)}</button>
          <button class="narrow" aria-label="最近"><i class="arrow"></i></button>
          <button aria-label="打印">${icon("print", 17)}</button>
          <button aria-label="另存为">${icon("saveas", 17)}</button>${rule}
          <button aria-label="撤销">${icon("undo", 15)}</button>
          <button aria-label="重做">${icon("redo", 15)}</button>
          <button class="narrow" aria-label="自定义">${icon("more", 14)}</button>
        </div>
        <div class="context">铣床</div>
        <div class="doc-title">E:\\素材\\教学素材\\软件自学入网素材\\第三章素材\\2-1四轴定轴圆鼻刀刀盘.mcam* - Mastercam 铣削 2021</div>
        <div class="window">
          <button aria-label="最小化">${icon("min", 12)}</button><button aria-label="还原">${icon("restore", 12)}</button><button aria-label="关闭">${icon("close", 11)}</button>
        </div>
      </div>
      <nav class="tabs">
        <button class="file">文件</button>
        ${["主页", "线框", "曲面", "实体", "建模"].map((t) => html`<button>${t}</button>`)}
        <button class="account">我的 Mastercam</button>
        <button class="small" aria-label="帮助">${icon("help", 17)}</button>
        <button class="small" aria-label="折叠">${icon("caretup", 12)}</button>
      </nav>
      <div class="ribbon">
        <div class="section">
          <div class="buttons">
            ${this.ribbonButton("mill", "铣床")}${this.ribbonButton("lathe", "车床")}${this.ribbonButton("wire", "线切割")}
            ${this.ribbonButton("router", "木雕")}${this.ribbonButton("design", "设计", false)}
          </div>
          <div class="caption">机床类型</div>
        </div>
        <div class="section setup">
          <div class="buttons">${this.ribbonButton("control", "控制定义", false, true)}${this.ribbonButton("mill", "机床定义", false, true)}${this.ribbonButton("design", "材料", false)}</div>
          <div class="caption">机床设置</div>
        </div>
      </div>
      <div class="work">
        <aside class="panel">
          <h1>刀路</h1>
          <div class="tools">
            ${this.tool("select")}${this.tool("deselect")}${rule}${this.tool("regen")}${this.tool("regenx")}${combo("swap")}${rule}
            ${this.tool("waves")}${this.tool("verify")}${this.tool("wavegear")}${this.tool("g1")}${this.tool("toolarrow")}${rule}${this.tool("wand")}${rule}
          </div>
          <div class="tools">
            ${this.tool("lock")}${this.tool("wavy")}${this.tool("ghost")}${rule}${this.tool("down")}${this.tool("up")}${this.tool("loop")}${this.tool("split")}${rule}
            ${this.tool("wavesel", true)}${this.tool("shapes")}${combo("listgear")}${rule}${this.tool("machine")}${this.tool("ball")}
          </div>
          <div class="tree">
            <ul>
              ${tree.map((r) => html`<li class=${classMap({ dim: !!r.dim })}>${[...r.guides].map(guide)}${icon(r.glyph, 16, 16, 16)}<span>${r.text}</span></li>`)}
            </ul>
            <div class="scroll"><button aria-label="向左滚动"><svg width="5" height="9" viewBox="0 0 5 9"><path d="M5 0v9L0 4.500z" fill="#666"/></svg></button><span></span></div>
          </div>
          <div class="bottom">
            <button class="on">刀路</button><button>实体</button><button>平面</button><button>层别</button><span class="rest"></span>
          </div>
        </aside>
        <main class="view">
          <div class="mask">${Array.from({ length: 15 }, (_, i) => html`<button aria-label="选择过滤 ${i + 1}">${icon("q" + i, 16, 16, 16)}</button>`)}</div>
          <div class="mark">
            <div class="name"><span>我</span><span class="heart"><svg width="43" height="38" viewBox="0 0 43 38"><path d="M21.500 38C16 28 0 23 1 11 2-1 17-3 21.500 6 26-3 41-1 42 11c1 12-15 17-20.500 27z" fill="#e81414"/></svg><span>爱</span></span><span>自</span><span>學</span><span>網</span></div>
            <a href="#">www.52zxw.com</a>
          </div>
          <div class="scale">
            <div>248 毫米</div>
            <svg width="97" height="25" viewBox="0 0 97 25"><path d="M.500 10v14M.500 12.500h96M96.500 1v23" fill="none" stroke="#000"/></svg>
            <div class="unit">公制</div>
          </div>
        </main>
      </div>
      <div class="status">
        <button>截面视图: 关闭</button><span>选择的图素: 0</span>
        <span>X:</span><span>-15.95061</span><span>Y:</span><span>-12.82854</span><span>Z:</span><span>0.00000</span><i class="arrow"></i>
        <button>3D</button><button>绘图平面: 平面</button><i class="arrow"></i><button>刀具平面: 平面</button><i class="arrow"></i><button>WCS: 平面</button><i class="arrow"></i>
        ${["wire", "wire2", "wire3", "solid", "solid", "half"].map(
          (k, i) => html`<button class=${classMap({ ball: true, on: i === 3 })} aria-label="着色 ${i + 1}"><svg width="16" height="16" viewBox="0 0 16 16">${sphere(k)}</svg></button>`
        )}
      </div>`;
  }

  private renderDialog() {
    return html`<section class="dialog" role="dialog" aria-labelledby="dlg">
      <header>
        <h2 id="dlg">机床模拟</h2>
        <button aria-label="关闭"><svg class="icon" width="12" height="12" viewBox="0 0 12 12"><path d="M1 1l10 10M11 1L1 11" stroke="#111" stroke-width="1.200"/></svg></button>
      </header>
      <div class="body">
        <div class="pages" role="tablist">
          ${["机床模拟", "后处理设置", "机床定义"].map(
            (t, i) => html`<button role="tab" class=${classMap({ on: this.tab === i })} aria-selected=${this.tab === i} @click=${() => (this.tab = i)}>${t}</button>`
          )}
        </div>
        <div class="page" role="tabpanel">
          <div class="left">
            <fieldset><legend>机床</legend><combo-box label="机床" value="2_4AXGEN_VMCTA" glyph="vmc"></combo-box></fieldset>
            <fieldset class="work-group">
              <legend>工件</legend>
              <div class="pair">
                <span>图形</span><combo-box label="图形" value="全部图形"></combo-box>
                <span>位置</span><combo-box label="位置" value="自动"></combo-box>
              </div>
            </fieldset>
            <fieldset class="fixture"><legend>夹具</legend><combo-box label="夹具" value="无"></combo-box></fieldset>
            <fieldset class="material"><legend>材料</legend><combo-box label="材料" value="不使用毛坯"></combo-box></fieldset>
            <fieldset class="tolerance">
              <legend>公差</legend>
              <div class="pair">
                <label for="tol">模拟公差</label><input class="text" id="tol" value="0.18" />
                <label for="offset">目标工件预里留</label><input class="text" id="offset" value="0" />
              </div>
            </fieldset>
            <fieldset class="other">
              <legend>其他</legend>
              <div class="checks">
                <label class="choice"><input type="checkbox" />自动开始</label>
                <label class="choice"><input type="checkbox" />转换为 WCS</label>
              </div>
            </fieldset>
            <fieldset class="moves">
              <legend>在模拟时添加所需中间位置</legend>
              ${["仅移动过程提供", "在模拟时添加所需中间位置"].map(
                (t, i) => html`<label class="choice tall"><input type="radio" name="move" .checked=${this.movement === i} @change=${() => (this.movement = i)} />${t}</label>`
              )}
              <div>
                <label class="choice sub"><input type="radio" name="tcp" checked disabled />开启 TCP (基于机床角度)</label>
                <label class="choice sub"><input type="radio" name="tcp" disabled />关闭 TCP</label>
              </div>
              <div class="limits">
                <label for="dist">最大距离变化</label><input class="text" id="dist" value="1." disabled />
                <label class="second" for="angle">最大角度变化</label><input class="text" id="angle" value="3." disabled />
              </div>
            </fieldset>
          </div>
          <div class="right">
            <fieldset class="preview"><legend>预览</legend><machine-preview></machine-preview></fieldset>
            <fieldset class="colours"><legend>颜色及快捷键</legend><label class="choice"><input type="checkbox" checked />用 Mastercam 设置</label></fieldset>
            <fieldset class="values"><legend>在列表显示移动值</legend><combo-box label="在列表显示移动值" value="相对于工件位置值"></combo-box></fieldset>
          </div>
        </div>
      </div>
      <footer>
        <button class="push">默认</button>
        <button class="push simulate">模拟</button>
        <button class="push default" aria-label="确定"><svg width="20" height="20" viewBox="0 0 22 22"><path d="M2 12l3-2 4 5C11 9 14 4 20 1c-5 6-8 12-10 20H8z" fill="#4fb828" stroke="#2f8a14"/></svg></button>
        <button class="push" aria-label="取消"><svg width="20" height="20" viewBox="0 0 20 20"><path d="M5 1l5 5 4-5 5 4-5 5 5 6-5 4-4-6-5 6-4-5 5-5-5-5z" fill="#f0501c" stroke="#b83408"/></svg></button>
        <button class="push" aria-label="帮助"><svg width="15" height="20" viewBox="0 0 16 22"><path d="M3 7c0-6 10-6 10-1 0 4-5 4-5 9" fill="none" stroke="#55555f" stroke-width="4.500"/><path d="M3 7c0-6 10-6 10-1 0 4-5 4-5 9" fill="none" stroke="#d4d4dc" stroke-width="2.400"/><circle cx="8" cy="19" r="2.200" fill="#d4d4dc" stroke="#55555f"/></svg></button>
      </footer>
    </section>`;
  }

  private renderOverlays() {
    return html`
      <div class="banner"><span>www.52zxw.com</span>（我爱自学网）原创出品，版权所有，未经允许不得转播和录制。</div>
      <svg class="gauge" width="66" height="68" viewBox="0 0 66 68" font-family="Liberation Sans, sans-serif">
        <defs><radialGradient id="glow"><stop offset=".5" stop-color="#fff"/><stop offset="1" stop-color="#b8f2c8"/></radialGradient></defs>
        <circle cx="33" cy="34" r="32" fill="#fff" stroke="#e6e6e6"/>
        <path d="M33 4A30 30 0 0 1 62 43" fill="none" stroke="#3fd15c" stroke-width="5"/>
        <circle cx="33" cy="33" r="29" fill="url(#glow)" stroke="#35b45c" stroke-width="1.500"/>
        <text x="13" y="35" font-size="23" fill="#222" font-family="Open Sans, sans-serif" font-weight="300">30</text><text x="39" y="35" font-size="12" fill="#222">%</text>
        <path d="M16 42v8a3 3 0 1 0 3 0v-8a1.500 1.500 0 0 0-3 0z" fill="none" stroke="#2fae5c" stroke-width="1.500"/>
        <text x="25" y="51" font-size="10" fill="#222">42°C</text>
      </svg>
      <div class="ime">
        <svg class="s" width="28" height="28" viewBox="0 0 28 28"><path d="M1 5L24 1q2 8 3 23L5 27Q1 16 1 5z" fill="#e2532a"/><path d="M20 8C15 4 7 6 8 11c1 4 12 2 12 7 0 4-7 5-12 2" fill="none" stroke="#fff" stroke-width="4"/></svg>
        <div class="keys">
          <span>中</span>
          <svg width="14" height="14" viewBox="0 0 14 14"><path d="M9 0c8 5 3 16-9 12C7 11 10 6 9 0z" fill="#2a6cb4"/></svg>
          <svg width="12" height="12" viewBox="0 0 12 12"><circle cx="3" cy="3" r="2" fill="none" stroke="#2a6cb4" stroke-width="1.300"/><path d="M8 5h3c1 3-1 6-3 6 1-2 1-3 0-3z" fill="#2a6cb4"/></svg>
          <svg width="16" height="12" viewBox="0 0 16 12"><path d="M0 0h16v12H0z" fill="#2a6cb4"/><path d="M2 3h12M2 6h12" stroke="#fff" stroke-width="1.500" stroke-dasharray="2 1"/><path d="M4 9.500h8" stroke="#fff" stroke-width="1.500"/></svg>
        </div>
      </div>
      <i class="edge tl"></i><i class="edge tr"></i><i class="edge bl"></i><i class="edge br"></i><i class="edge dash-r"></i><i class="edge dash-b"></i>`;
  }

  render() {
    return html`<div class="app">${this.renderShell()}${this.renderDialog()}${this.renderOverlays()}</div>`;
  }
}
